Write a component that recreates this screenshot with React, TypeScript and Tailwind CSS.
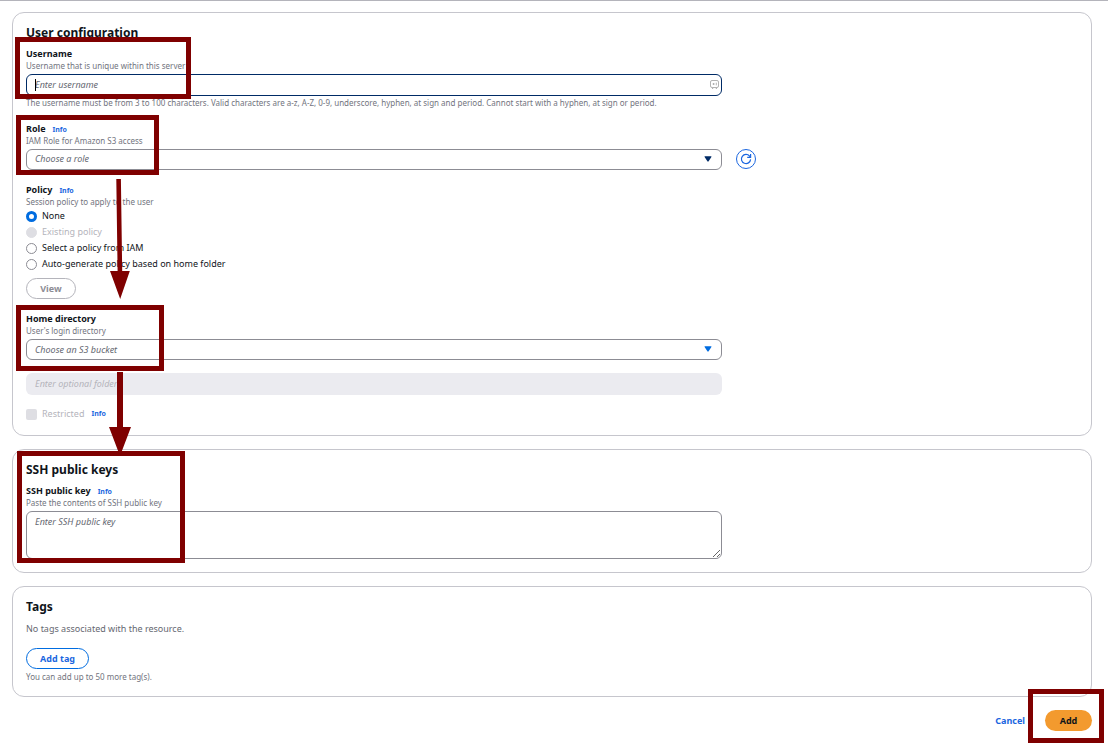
import type { ReactNode } from 'react';

const policies = [
  { id: 'none', label: 'None' },
  { id: 'existing', label: 'Existing policy', disabled: true },
  { id: 'iam', label: 'Select a policy from IAM' },
  { id: 'auto', label: 'Auto-generate policy based on home folder' },
];

function Card({ title, children }: { title: string; children: ReactNode }) {
  return (
    <section className="rounded-xl border border-[#c6c6cd] bg-white px-[13px] pt-3 pb-[13px]">
      <h2 className="mb-[7px] text-[12px] leading-4 font-bold text-[#0f141a]">{title}</h2>
      {children}
    </section>
  );
}

function InfoLink() {
  return (
    <a href="#info" className="ml-[7px] text-[7px] leading-3 font-bold text-[#1a66e0]">
      Info
    </a>
  );
}

interface FieldLabelProps {
  htmlFor: string;
  label: string;
  hint: string;
  info?: boolean;
}

function FieldLabel({ htmlFor, label, hint, info }: FieldLabelProps) {
  return (
    <div className="mb-0.5">
      <div className="flex h-3 items-baseline">
        <label htmlFor={htmlFor} className="text-[9px] leading-3 font-bold text-[#0f141a]">
          {label}
        </label>
        {info && <InfoLink />}
      </div>
      <p className="text-[8px] leading-3 text-[#72747e]">{hint}</p>
    </div>
  );
}

interface PickerProps {
  id: string;
  placeholder: string;
  arrowClass: string;
}

function Picker({ id, placeholder, arrowClass }: PickerProps) {
  return (
    <div className="relative w-full max-w-[696px]">
      <select
        id={id}
        className="block h-[21px] w-full appearance-none rounded-md border border-[#8c8c94] bg-white px-2 text-[9px] text-[#656871] italic outline-none"
      >
        <option>{placeholder}</option>
      </select>
      <svg viewBox="0 0 8 6" className={`pointer-events-none absolute top-[7px] right-2.5 h-1.5 w-2 ${arrowClass}`}>
        <path d="M1 .2h6q.8 0 .4.7L4.6 5.3q-.6.7-1.2 0L.6.9Q.2.2 1 .2z" fill="currentColor" />
      </svg>
    </div>
  );
}

export default function App() {
  return (
    <div className="relative border-t border-[#b4b4bb] bg-white pt-[11px] pr-4 pb-4 pl-3 font-['Noto_Sans',sans-serif] text-[#0f141a]">
      <form className="flex flex-col gap-[13px]" onSubmit={e => e.preventDefault()}>
        <Card title="User configuration">
          <div className="flex flex-col gap-3.5">
            <div>
              <FieldLabel htmlFor="username" label="Username" hint="Username that is unique within this server" />
              <div className="relative w-full max-w-[696px]">
                <input
                  id="username"
                  type="text"
                  placeholder="Enter username"
                  className="block h-[22px] w-full rounded-md border border-[#002b66] bg-white px-2 pb-0.5 text-[9px] outline-none placeholder:text-[#656871] placeholder:italic"
                />
                <span className="absolute top-[5px] left-[9px] h-3 w-px bg-black" />
                <svg viewBox="0 0 9 9" className="absolute top-1.5 right-[3px] size-[9px]" fill="none" stroke="#a0a0a0">
                  <rect x=".5" y=".5" width="8" height="7" rx="1.5" strokeWidth=".8" />
                  <path d="M2 8.5h1.2M5.8 8.5H7" strokeWidth=".8" />
                  <path d="M2.6 4h2M3.6 3v2M6.3 2.7v2.6" strokeWidth=".8" />
                </svg>
              </div>
              <p className="mt-px text-[8px] leading-3 text-[#72747e]">
                The username must be from 3 to 100 characters. Valid characters are a-z, A-Z, 0-9, underscore, hyphen,
                at sign and period. Cannot start with a hyphen, at sign or period.
              </p>
            </div>

            <div>
              <FieldLabel htmlFor="role" label="Role" hint="IAM Role for Amazon S3 access" info />
              <div className="flex h-5 items-center gap-3.5">
                <Picker id="role" placeholder="Choose a role" arrowClass="text-[#002b66]" />
                <button
                  type="button"
                  aria-label="Refresh roles"
                  className="flex size-5 shrink-0 items-center justify-center rounded-full border border-[#1a66e0] text-[#1a66e0]"
                >
                  <svg viewBox="0 0 12 12" className="size-3" fill="none" stroke="currentColor" strokeWidth="1.2">
                    <path d="M10.6 6.4A4.6 4.6 0 1 1 9.6 3.1L10.4 4.2" />
                    <path d="M10.6 1v3.4H7.2" />
                  </svg>
                </button>
              </div>
            </div>

            <div className="pt-px">
              <div className="flex h-3 items-baseline">
                <span id="policy-label" className="text-[9px] leading-3 font-bold">
                  Policy
                </span>
                <InfoLink />
              </div>
              <p className="text-[8px] leading-3 text-[#72747e]">Session policy to apply to the user</p>
              <div role="radiogroup" aria-labelledby="policy-label">
                {policies.map(p => (
                  <label
                    key={p.id}
                    className="flex h-4 items-center gap-[5px] text-[9px] leading-4 has-disabled:text-[#b4b4bb]"
                  >
                    <input
                      type="radio"
                      name="policy"
                      defaultChecked={p.id === 'none'}
                      disabled={p.disabled}
                      className="size-[11px] shrink-0 appearance-none rounded-full border border-[#8c8c94] bg-white checked:border-[3px] checked:border-[#006ce0] disabled:border-[#dedee3] disabled:bg-[#dedee3]"
                    />
                    {p.label}
                  </label>
                ))}
              </div>
              <button
                type="button"
                className="mt-1.5 flex h-[21px] w-[50px] items-center justify-center rounded-full border border-[#b4b4bb] text-[9px] font-bold text-[#8c8c94]"
              >
                View
              </button>
            </div>

            <div>
              <FieldLabel htmlFor="bucket" label="Home directory" hint="User's login directory" />
              <Picker id="bucket" placeholder="Choose an S3 bucket" arrowClass="text-[#006ce0]" />
              <input
                type="text"
                aria-label="Optional folder"
                placeholder="Enter optional folder"
                disabled
                className="mt-[13px] block h-[22px] w-full max-w-[696px] rounded-md bg-[#ebebf0] px-[9px] pb-0.5 text-[9px] placeholder:text-[#b4b4bb] placeholder:italic"
              />
              <div className="mt-[11px] flex h-4 items-center">
                <label className="flex items-center gap-[5px] text-[9px] leading-4 text-[#b4b4bb]">
                  <input type="checkbox" disabled className="size-[11px] appearance-none rounded-xs bg-[#dedee3]" />
                  Restricted
                </label>
                <InfoLink />
              </div>
            </div>
          </div>
        </Card>

        <Card title="SSH public keys">
          <FieldLabel htmlFor="ssh-key" label="SSH public key" hint="Paste the contents of SSH public key" info />
          <textarea
            id="ssh-key"
            placeholder="Enter SSH public key"
            className="block h-12 w-full max-w-[696px] rounded-md border border-[#8c8c94] px-2 py-1 text-[9px] leading-3 outline-none placeholder:text-[#656871] placeholder:italic"
          />
        </Card>

        <Card title="Tags">
          <p className="text-[9px] leading-3.5 text-[#656871]">No tags associated with the resource.</p>
          <button
            type="button"
            className="mt-3 flex h-[21px] w-[63px] items-center justify-center rounded-full border border-[#006ce0] text-[9px] font-bold text-[#1a66e0]"
          >
            Add tag
          </button>
          <p className="mt-0.5 text-[8px] leading-3 text-[#72747e]">You can add up to 50 more tag(s).</p>
        </Card>

        <div className="flex items-center justify-end gap-5">
          <button type="button" className="text-[9px] font-bold text-[#1a66e0]">
            Cancel
          </button>
          <button type="submit" className="h-[21px] w-[47px] rounded-full bg-[#f39a2e] text-[9px] font-bold">
            Add
          </button>
        </div>
      </form>

      {/* walkthrough highlights */}
      <div className="pointer-events-none absolute top-9 left-[15px] h-[62px] w-44 border-5 border-[#7f0000]" />
      <div className="pointer-events-none absolute top-[114px] left-4 h-[60px] w-[143px] border-5 border-[#7f0000]" />
      <div className="pointer-events-none absolute top-[304px] left-4 h-[66px] w-[148px] border-5 border-[#7f0000]" />
      <div className="pointer-events-none absolute top-[450px] left-[17px] h-[112px] w-[168px] border-5 border-[#7f0000]" />
      <div className="pointer-events-none absolute top-[688px] right-1 h-[54px] w-[76px] border-5 border-[#7f0000]" />
      <svg viewBox="0 0 22 120" className="pointer-events-none absolute top-[178px] left-[109px] h-[120px] w-[22px]">
        <path d="M7.3 0h4.6l1.3 92h7.6L11.2 120 1 92h7.6z" fill="#7f0000" />
      </svg>
      <svg viewBox="0 0 22 84" className="pointer-events-none absolute top-[371px] left-[109px] h-[84px] w-[22px]">
        <path d="M8 0h6v55h8L11 84 0 55h8z" fill="#7f0000" />
      </svg>
    </div>
  );
}
